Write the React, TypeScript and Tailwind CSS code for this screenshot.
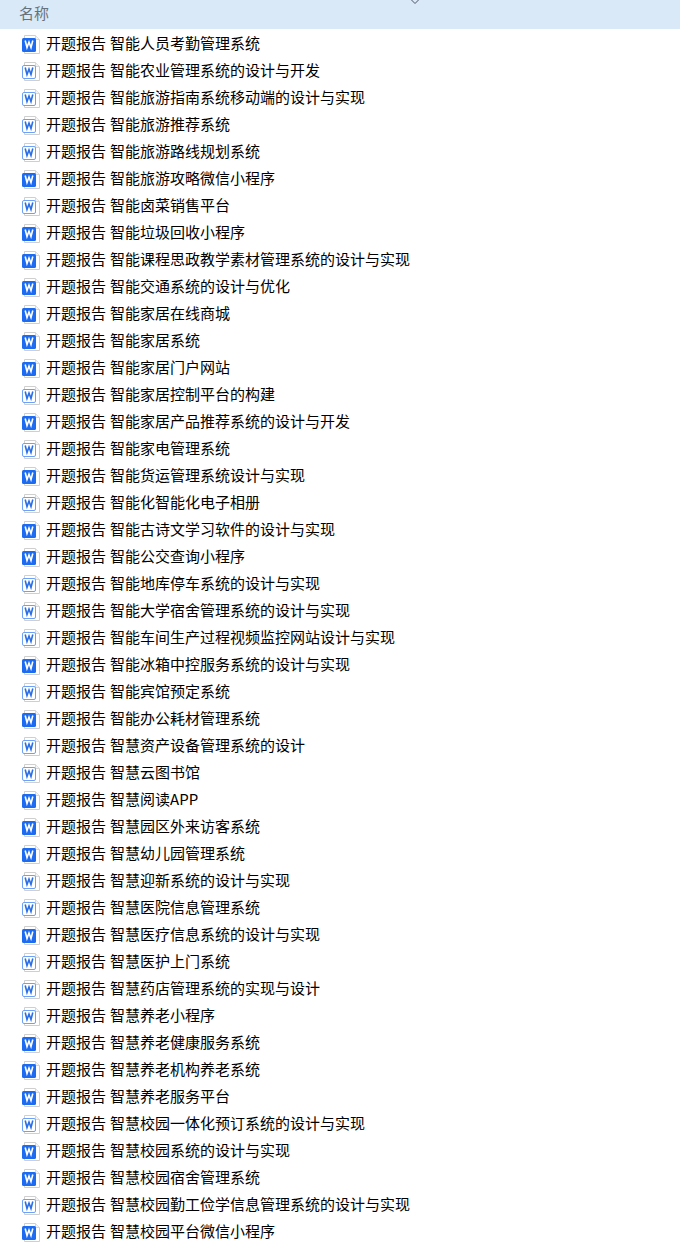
const rows: [string, boolean][] = [
  ["智能人员考勤管理系统", true],
  ["智能农业管理系统的设计与开发", false],
  ["智能旅游指南系统移动端的设计与实现", false],
  ["智能旅游推荐系统", false],
  ["智能旅游路线规划系统", false],
  ["智能旅游攻略微信小程序", true],
  ["智能卤菜销售平台", false],
  ["智能垃圾回收小程序", true],
  ["智能课程思政教学素材管理系统的设计与实现", true],
  ["智能交通系统的设计与优化", true],
  ["智能家居在线商城", true],
  ["智能家居系统", true],
  ["智能家居门户网站", true],
  ["智能家居控制平台的构建", false],
  ["智能家居产品推荐系统的设计与开发", true],
  ["智能家电管理系统", false],
  ["智能货运管理系统设计与实现", true],
  ["智能化智能化电子相册", false],
  ["智能古诗文学习软件的设计与实现", true],
  ["智能公交查询小程序", true],
  ["智能地库停车系统的设计与实现", false],
  ["智能大学宿舍管理系统的设计与实现", false],
  ["智能车间生产过程视频监控网站设计与实现", false],
  ["智能冰箱中控服务系统的设计与实现", true],
  ["智能宾馆预定系统", false],
  ["智能办公耗材管理系统", true],
  ["智慧资产设备管理系统的设计", false],
  ["智慧云图书馆", false],
  ["智慧阅读APP", true],
  ["智慧园区外来访客系统", true],
  ["智慧幼儿园管理系统", true],
  ["智慧迎新系统的设计与实现", false],
  ["智慧医院信息管理系统", false],
  ["智慧医疗信息系统的设计与实现", true],
  ["智慧医护上门系统", false],
  ["智慧药店管理系统的实现与设计", false],
  ["智慧养老小程序", false],
  ["智慧养老健康服务系统", true],
  ["智慧养老机构养老系统", true],
  ["智慧养老服务平台", true],
  ["智慧校园一体化预订系统的设计与实现", false],
  ["智慧校园系统的设计与实现", true],
  ["智慧校园宿舍管理系统", true],
  ["智慧校园勤工俭学信息管理系统的设计与实现", false],
  ["智慧校园平台微信小程序", true],
];

// word file icon, filled or outlined blue badge over a grey page
const WordIcon = ({ filled }: { filled: boolean }) => (
  <svg className="shrink-0" width="20" height="20" viewBox="0 0 20 20" fill="none">
    <path d="M3.5 0.5H14.5L18.5 4.5V18.5H3.5Z" fill="#fff" stroke="#cfcfcf" />
    <path d="M14.5 0.5V4.5H18.5" fill="#f4f4f4" stroke="#d8d8d8" />
    {filled ? (
      <rect x="1" y="3" width="14" height="14" rx="1.5" fill="#1c6bf0" />
    ) : (
      <rect x="1.5" y="3.5" width="13" height="13" rx="1.5" fill="#fff" stroke="#6ea1f5" />
    )}
    <path
      d="M4.2 5.5L6 12.5L8 7L10 12.5L11.8 5.5"
      stroke={filled ? "#fff" : "#2a6fe6"}
      strokeWidth="1.6"
    />
  </svg>
);

export default function App() {
  return (
    <div className="relative h-[1244px] w-[680px] overflow-hidden bg-white font-['Noto_Sans_CJK_SC','Noto_Sans',sans-serif]">
      <div className="flex h-[29px] items-center bg-[#d9e9f8] pb-[3px] pl-[19px] text-[15px] text-[#66717e]">
        名称
      </div>
      <svg className="absolute left-[411px] top-0" width="8" height="4" viewBox="0 0 8 4" fill="none">
        <path d="M0.5 0L4 3.5L7.5 0" stroke="#4c5560" />
      </svg>
      <ul className="pt-[2px]">
        {rows.map(([name, filled]) => (
          <li key={name} className="flex h-[27px] items-center gap-[5px] pl-[21px] text-[15px] [word-spacing:0.7px] whitespace-pre text-black">
            <WordIcon filled={filled} />
            <span className="pb-[2px]">开题报告 {name}</span>
          </li>
        ))}
      </ul>
    </div>
  );
}
